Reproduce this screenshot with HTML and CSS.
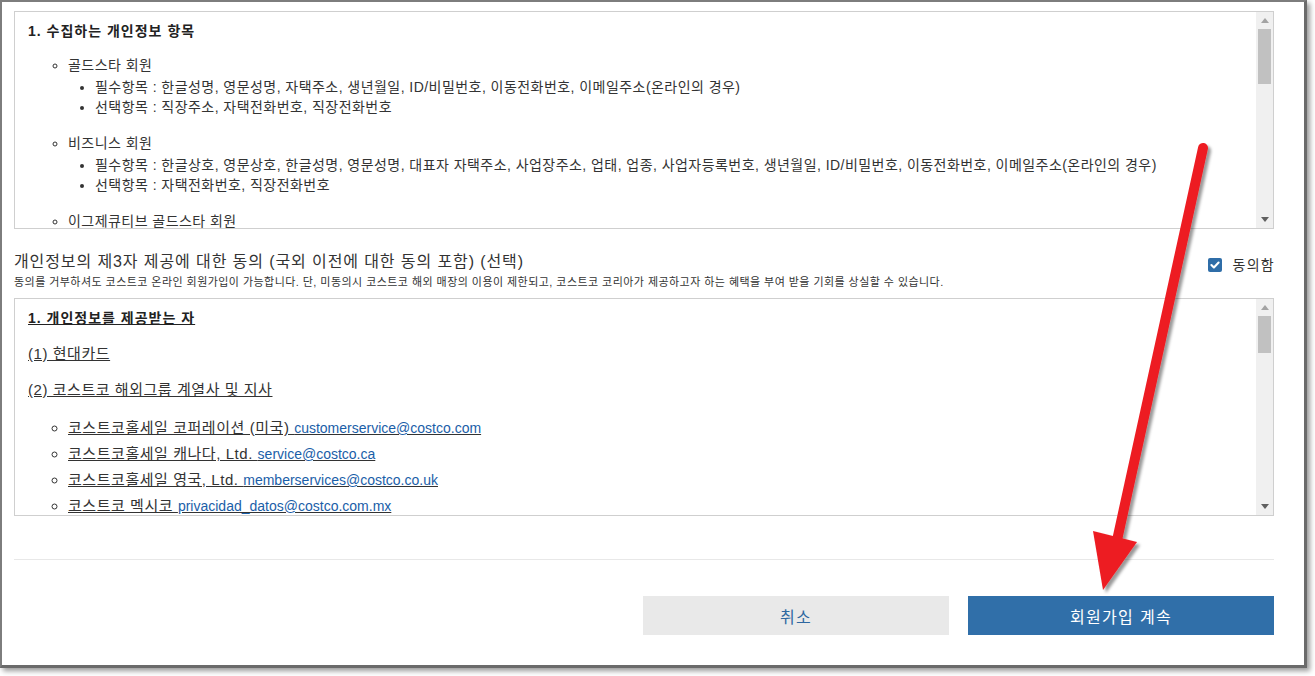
FILE: index.html
```html
<!DOCTYPE html>
<html lang="ko">
<head>
    <meta charset="UTF-8">
    <title>회원가입 - 개인정보 동의</title>
    <link rel="stylesheet" href="styles.css">
</head>
<body>
<div class="page">
    <div class="frame">
        <div class="terms-box">
            <div class="terms-content">
                <div class="terms-heading">1. 수집하는 개인정보 항목</div>
                <ul class="member-list">
                    <li>골드스타 회원
                        <ul>
                            <li>필수항목 : 한글성명, 영문성명, 자택주소, 생년월일, ID/비밀번호, 이동전화번호, 이메일주소(온라인의 경우)</li>
                            <li>선택항목 : 직장주소, 자택전화번호, 직장전화번호</li>
                        </ul>
                    </li>
                    <li>비즈니스 회원
                        <ul>
                            <li>필수항목 : 한글상호, 영문상호, 한글성명, 영문성명, 대표자 자택주소, 사업장주소, 업태, 업종, 사업자등록번호, 생년월일, ID/비밀번호, 이동전화번호, 이메일주소(온라인의 경우)</li>
                            <li>선택항목 : 자택전화번호, 직장전화번호</li>
                        </ul>
                    </li>
                    <li>이그제큐티브 골드스타 회원
                        <ul>
                            <li>필수항목 : 한글성명, 영문성명, 자택주소, 생년월일, ID/비밀번호, 이동전화번호, 이메일주소(온라인의 경우)</li>
                            <li>선택항목 : 직장주소, 자택전화번호, 직장전화번호</li>
                        </ul>
                    </li>
                </ul>
            </div>
            <div class="scrollbar">
                <div class="scroll-btn off">
                    <svg width="8" height="5" viewBox="0 0 8 5"><polygon points="0,5 8,5 4,0"/></svg>
                </div>
                <div class="scroll-track">
                    <div class="scroll-thumb thumb-a"></div>
                </div>
                <div class="scroll-btn">
                    <svg width="8" height="5" viewBox="0 0 8 5"><polygon points="0,0 8,0 4,5"/></svg>
                </div>
            </div>
        </div>

        <div class="consent-row">
            <div class="consent-text">
                <div class="consent-title">개인정보의 제3자 제공에 대한 동의 (국외 이전에 대한 동의 포함) (선택)</div>
                <div class="consent-desc">동의를 거부하셔도 코스트코 온라인 회원가입이 가능합니다. 단, 미동의시 코스트코 해외 매장의 이용이 제한되고, 코스트코 코리아가 제공하고자 하는 혜택을 부여 받을 기회를 상실할 수 있습니다.</div>
            </div>
            <label class="agree">
                <span class="check">
                    <svg width="14" height="14" viewBox="0 0 14 14"><path d="M3.4 7.1 L5.9 9.5 L10.6 4.6" fill="none" stroke="#fff" stroke-width="2.1" stroke-linecap="round" stroke-linejoin="round"/></svg>
                </span>
                동의함
            </label>
        </div>

        <div class="terms-box">
            <div class="terms-content terms-alt">
                <p class="terms-heading link-line">1. 개인정보를 제공받는 자</p>
                <p class="link-line">(1) 현대카드</p>
                <p class="link-line">(2) 코스트코 해외그룹 계열사 및 지사</p>
                <ul class="company-list">
                    <li><a href="#">코스트코홀세일 코퍼레이션 (미국) <span class="mail">customerservice@costco.com</span></a></li>
                    <li><a href="#">코스트코홀세일 캐나다, Ltd. <span class="mail">service@costco.ca</span></a></li>
                    <li><a href="#">코스트코홀세일 영국, Ltd. <span class="mail">memberservices@costco.co.uk</span></a></li>
                    <li><a href="#">코스트코 멕시코 <span class="mail">privacidad_datos@costco.com.mx</span></a></li>
                    <li><a href="#">코스트코 재팬 <span class="mail">privacy@costco.co.jp</span></a></li>
                    <li><a href="#">코스트코 대만 <span class="mail">privacy@costco.com.tw</span></a></li>
                </ul>
            </div>
            <div class="scrollbar">
                <div class="scroll-btn off">
                    <svg width="8" height="5" viewBox="0 0 8 5"><polygon points="0,5 8,5 4,0"/></svg>
                </div>
                <div class="scroll-track">
                    <div class="scroll-thumb thumb-b"></div>
                </div>
                <div class="scroll-btn">
                    <svg width="8" height="5" viewBox="0 0 8 5"><polygon points="0,0 8,0 4,5"/></svg>
                </div>
            </div>
        </div>

        <hr class="divider">

        <div class="actions">
            <button class="btn btn-cancel">취소</button>
            <button class="btn btn-next">회원가입 계속</button>
        </div>
    </div>

    <!-- 안내용 화살표 -->
    <svg class="arrow" width="1315" height="676" viewBox="0 0 1315 676">
        <defs>
            <filter id="arrowShadow" x="-50%" y="-10%" width="200%" height="120%">
                <feDropShadow dx="3" dy="3" stdDeviation="1.4" flood-color="#000" flood-opacity="0.4"/>
            </filter>
        </defs>
        <g filter="url(#arrowShadow)">
            <line x1="1203" y1="148" x2="1116" y2="545" stroke="#ed1c24" stroke-width="10" stroke-linecap="round"/>
            <polygon points="1093,531 1137,542 1103,590" fill="#ed1c24"/>
        </g>
    </svg>
</div>
</body>
</html>
```

FILE: styles.css
```css
body {
    margin: 0;
    background: #fff;
    font-family: "Liberation Sans", "Noto Sans CJK KR", sans-serif;
    font-size: 14px;
    color: #333;
}
.page {
    position: relative;
    width: 1315px;
    height: 676px;
    overflow: hidden;
}
.frame {
    box-sizing: border-box;
    width: 1307px;
    height: 668px;
    background: #fff;
    border: 2px solid #7d7d7d;
    border-right: 3px solid #6a6a6a;
    border-bottom: 3px solid #6a6a6a;
    box-shadow: 3px 3px 5px rgba(0,0,0,0.4);
    padding: 9px 30px 0 12px;
}
.terms-box {
    display: flex;
    height: 218px;
    border: 1px solid #cfcfcf;
    box-sizing: border-box;
}
.terms-content {
    flex: 1;
    overflow: hidden;
    padding: 9px 13px 0;
    line-height: 20px;
    letter-spacing: 0.45px;
}
.terms-heading {
    font-weight: bold;
    font-size: 14px;
    letter-spacing: 1px;
    color: #222;
}
.member-list {
    list-style: circle;
    margin: 14px 0 0;
    padding-left: 40px;
}
.member-list ul {
    list-style: disc;
    margin: 2px 0 16px;
    padding-left: 27px;
}
.terms-alt {
    font-size: 15px;
    letter-spacing: 0.55px;
}
.link-line {
    margin: 0 0 16px;
    text-decoration: underline;
}
.company-list {
    list-style: circle;
    margin: 18px 0 0;
    padding-left: 40px;
}
.company-list li {
    margin-bottom: 6px;
}
.company-list a {
    color: #333;
    text-decoration: underline;
}
.company-list .mail {
    color: #1a5ea8;
    font-size: 14px;
    letter-spacing: 0;
}
.scrollbar {
    width: 17px;
    display: flex;
    flex-direction: column;
    background: #f0f0f0;
}
.scroll-btn {
    height: 17px;
    display: flex;
    align-items: center;
    justify-content: center;
    fill: #606060;
}
.scroll-btn.off {
    fill: #a3a3a3;
}
.scroll-track {
    flex: 1;
}
.scroll-thumb {
    margin: 0 2px;
    background: #c1c1c1;
}
.thumb-a {
    height: 55px;
}
.thumb-b {
    height: 37px;
}
.consent-row {
    display: flex;
    justify-content: space-between;
    align-items: flex-start;
    margin: 23px 0 9px;
}
.consent-title {
    font-size: 16px;
    line-height: 20px;
    letter-spacing: 0.9px;
}
.consent-desc {
    font-size: 11px;
    line-height: 14px;
    margin-top: 3px;
    letter-spacing: 0.45px;
}
.agree {
    display: flex;
    align-items: center;
    gap: 10px;
    margin-top: 3px;
    font-size: 14px;
    line-height: 20px;
    letter-spacing: 1.3px;
    margin-right: -1px;
}
.check {
    width: 14px;
    height: 14px;
    border-radius: 2px;
    background: #2f6da8;
    display: flex;
}
.divider {
    margin: 43px 0 0;
    border: 0;
    border-top: 1px solid #e8e8e8;
}
.actions {
    display: flex;
    justify-content: flex-end;
    gap: 19px;
    margin-top: 36px;
}
.btn {
    width: 306px;
    height: 39px;
    border: none;
    font-family: inherit;
    font-size: 16px;
    letter-spacing: 1.3px;
    cursor: pointer;
}
.btn-cancel {
    background: #e9e9e9;
    color: #2e67a0;
}
.btn-next {
    background: #306fa9;
    color: #fff;
}
.arrow {
    position: absolute;
    left: 0;
    top: 0;
    pointer-events: none;
}
```
